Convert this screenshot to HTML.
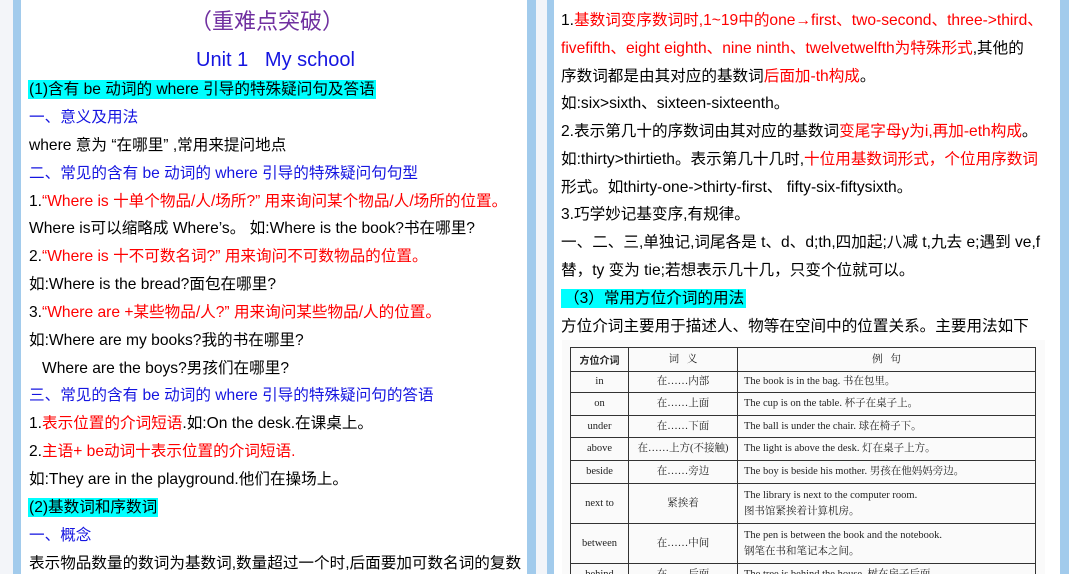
<!DOCTYPE html>
<html style="width:1069px;height:574px;overflow:hidden"><head><meta charset="utf-8"><style>
*{margin:0;padding:0;box-sizing:border-box}
body{width:1069px;height:574px;overflow:hidden;background:#f3f5f9;position:relative;font-family:"Liberation Sans","Noto Sans CJK SC",sans-serif;font-size:15.6px;color:#000}
.b{position:absolute;top:0;height:574px;background:#a2cbec}
.pg{position:absolute;top:0;height:574px;background:#fff}
.l{position:absolute;white-space:nowrap;line-height:20px}
.r{color:#ff0000}.bl{color:#1515e0}
.hl{background:#00ffff}
.wrap{position:absolute;left:0;top:0;width:1069px;height:574px;overflow:hidden}
table{position:absolute;left:570px;top:347px;border-collapse:collapse;font-family:"Liberation Serif","Noto Serif CJK SC",serif;font-size:10.5px;color:#222}
td{border:1.3px solid #333;padding:0 6px;line-height:16px}
td.c{text-align:center}
</style></head><body><div class="wrap">
<div class="b" style="left:13px;width:8px"></div>
<div class="pg" style="left:21px;width:506px"></div>
<div class="b" style="left:527px;width:9px"></div>
<div class="b" style="left:547px;width:7px"></div>
<div class="pg" style="left:554px;width:506px"></div>
<div class="b" style="left:1060px;width:9px"></div>

<div class="l" style="left:190px;top:9px;font-size:22px;line-height:26px;color:#7030a0">（重难点突破）</div>
<div class="l bl" style="left:196px;top:49px;font-size:20px;line-height:22px">Unit 1&nbsp;&nbsp;&nbsp;My school</div>
<div class="l" style="left:28px;top:80px"><span class="hl" style="padding:1px 1px">(1)含有 be 动词的 where 引导的特殊疑问句及答语</span></div>
<div class="l bl" style="left:29px;top:108px">一、意义及用法</div>
<div class="l" style="left:29px;top:136px">where 意为 “在哪里” ,常用来提问地点</div>
<div class="l bl" style="left:29px;top:164px">二、常见的含有 be 动词的 where 引导的特殊疑问句句型</div>
<div class="l" style="left:29px;top:192px">1.<span class="r">“Where is 十单个物品/人/场所?” 用来询问某个物品/人/场所的位置。</span></div>
<div class="l" style="left:29px;top:219px">Where is可以缩略成 Where’s。 如:Where is the book?书在哪里?</div>
<div class="l" style="left:29px;top:247px">2.<span class="r">“Where is 十不可数名词?” 用来询问不可数物品的位置。</span></div>
<div class="l" style="left:29px;top:275px">如:Where is the bread?面包在哪里?</div>
<div class="l" style="left:29px;top:303px">3.<span class="r">“Where are +某些物品/人?” 用来询问某些物品/人的位置。</span></div>
<div class="l" style="left:29px;top:331px">如:Where are my books?我的书在哪里?</div>
<div class="l" style="left:42px;top:359px">Where are the boys?男孩们在哪里?</div>
<div class="l bl" style="left:29px;top:386px">三、常见的含有 be 动词的 where 引导的特殊疑问句的答语</div>
<div class="l" style="left:29px;top:414px">1.<span class="r">表示位置的介词短语</span>.如:On the desk.在课桌上。</div>
<div class="l" style="left:29px;top:442px">2.<span class="r">主语+ be动词十表示位置的介词短语.</span></div>
<div class="l" style="left:29px;top:470px">如:They are in the playground.他们在操场上。</div>
<div class="l" style="left:28px;top:498px"><span class="hl" style="padding:1px 1px">(2)基数词和序数词</span></div>
<div class="l bl" style="left:29px;top:526px">一、概念</div>
<div class="l" style="left:29px;top:554px">表示物品数量的数词为基数词,数量超过一个时,后面要加可数名词的复数</div>

<div class="l" style="left:561px;top:11px">1.<span class="r">基数词变序数词时,1~19中的one→first、two-second、three-&gt;third、</span></div>
<div class="l" style="left:561px;top:39px"><span class="r">fivefifth、eight eighth、nine ninth、twelvetwelfth为特殊形式</span>,其他的</div>
<div class="l" style="left:561px;top:67px">序数词都是由其对应的基数词<span class="r">后面加-th构成</span>。</div>
<div class="l" style="left:561px;top:94px">如:six&gt;sixth、sixteen-sixteenth。</div>
<div class="l" style="left:561px;top:122px">2.表示第几十的序数词由其对应的基数词<span class="r">变尾字母y为i,再加-eth构成</span>。</div>
<div class="l" style="left:561px;top:150px">如:thirty&gt;thirtieth。表示第几十几时,<span class="r">十位用基数词形式，个位用序数词</span></div>
<div class="l" style="left:561px;top:178px">形式。如thirty-one-&gt;thirty-first、 fifty-six-fiftysixth。</div>
<div class="l" style="left:561px;top:205px">3.巧学妙记基变序,有规律。</div>
<div class="l" style="left:561px;top:233px">一、二、三,单独记,词尾各是 t、d、d;th,四加起;八减 t,九去 e;遇到 ve,f</div>
<div class="l" style="left:561px;top:261px">替，ty 变为 tie;若想表示几十几，只变个位就可以。</div>
<div class="l" style="left:561px;top:289px"><span class="hl" style="padding:1px 2px 1px 3px">（3）常用方位介词的用法</span></div>
<div class="l" style="left:561px;top:317px">方位介词主要用于描述人、物等在空间中的位置关系。主要用法如下</div>

<div style="position:absolute;left:562px;top:340px;width:483px;height:234px;background:#fafafa"></div>
<table>
<tr style="height:24px"><td class="c" style="width:58px;font-family:'Noto Sans CJK SC',sans-serif;font-weight:bold;font-size:10px">方位介词</td><td class="c" style="width:109px">词&nbsp;&nbsp;&nbsp;义</td><td class="c" style="width:298px">例&nbsp;&nbsp;&nbsp;句</td></tr>
<tr style="height:21px"><td class="c">in</td><td class="c">在……内部</td><td>The book is in the bag. 书在包里。</td></tr>
<tr style="height:23px"><td class="c">on</td><td class="c">在……上面</td><td>The cup is on the table. 杯子在桌子上。</td></tr>
<tr style="height:22px"><td class="c">under</td><td class="c">在……下面</td><td>The ball is under the chair. 球在椅子下。</td></tr>
<tr style="height:23px"><td class="c">above</td><td class="c">在……上方(不接触)</td><td>The light is above the desk. 灯在桌子上方。</td></tr>
<tr style="height:23px"><td class="c">beside</td><td class="c">在……旁边</td><td>The boy is beside his mother. 男孩在他妈妈旁边。</td></tr>
<tr style="height:40px"><td class="c">next to</td><td class="c">紧挨着</td><td>The library is next to the computer room.<br>图书馆紧挨着计算机房。</td></tr>
<tr style="height:40px"><td class="c">between</td><td class="c">在……中间</td><td>The pen is between the book and the notebook.<br>钢笔在书和笔记本之间。</td></tr>
<tr style="height:22px"><td class="c">behind</td><td class="c">在……后面</td><td>The tree is behind the house. 树在房子后面。</td></tr>
</table>
</div></body></html>
